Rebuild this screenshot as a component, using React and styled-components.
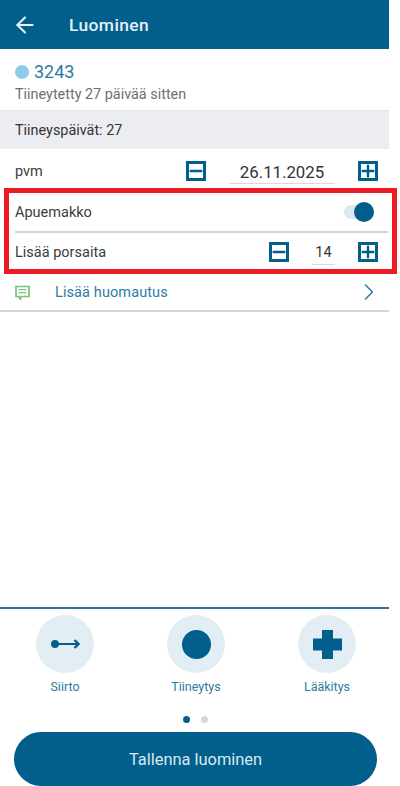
import styled, { createGlobalStyle } from "styled-components";
import { ArrowLeft, ChevronRight, Minus, Plus } from "lucide-react";

const Global = createGlobalStyle`
    html, body {
        margin: 0;
        padding: 0;
        background: #fff;
        overflow: hidden;
    }
    body {
        font-family: Roboto, "Liberation Sans", sans-serif;
    }
`;

const blue = "#025f8c";

const Page = styled.div`
    width: 389px;
    height: 786px;
    display: flex;
    flex-direction: column;
`;
const Header = styled.header`
    height: 49px;
    flex: none;
    background: ${blue};
    color: #e6f0f5;
    display: flex;
    align-items: center;
    padding-left: 12px;
    box-sizing: border-box;
`;
const Title = styled.div`
    font-size: 17.4px;
    font-weight: 500;
    margin-left: 31px;
    letter-spacing: 0.4px;
`;
const Animal = styled.div`
    height: 62px;
    flex: none;
    box-sizing: border-box;
    padding: 12px 15px 0;
    border-bottom: 1px solid #e4e4e8;
`;
const AnimalRow = styled.div`
    display: flex;
    align-items: center;
    gap: 5px;
    height: 21px;
    color: #2b7ca3;
    font-size: 18px;
`;
const Dot = styled.span`
    width: 14px;
    height: 14px;
    border-radius: 50%;
    background: #8ccbe9;
`;
const Sub = styled.div`
    font-size: 14.4px;
    color: #6f6f6f;
    margin-top: 4px;
`;
const Band = styled.div`
    height: 38px;
    flex: none;
    background: #ecedf2;
    display: flex;
    align-items: center;
    padding-left: 15px;
    font-size: 14.4px;
    color: #333;
`;
const Row = styled.div`
    height: ${(p) => p.$h}px;
    flex: none;
    box-sizing: border-box;
    display: flex;
    align-items: center;
    justify-content: space-between;
    font-size: 14.5px;
    color: #3c3c3c;
    padding-left: ${(p) => p.$pl || 0}px;
    padding-top: ${(p) => p.$pt || 0}px;
`;
const Stepper = styled.div`
    display: flex;
    align-items: center;
    margin-right: ${(p) => p.$mr}px;
`;
const StepBtn = styled.span`
    width: 20px;
    height: 20px;
    box-sizing: border-box;
    border: 3px solid ${blue};
    color: ${blue};
    display: flex;
    align-items: center;
    justify-content: center;
    svg {
        flex: none;
    }
`;
const Value = styled.div`
    width: ${(p) => p.$w}px;
    margin: 0 23px;
    text-align: center;
    border-bottom: 1px solid #d9d9d9;
    color: #333;
    font-size: ${(p) => p.$fs}px;
    line-height: 22px;
    padding-top: 2px;
`;
const RedBox = styled.div`
    margin: 0 -8px 0 4px;
    height: 86px;
    flex: none;
    box-sizing: border-box;
    border: 5px solid #ed1c24;
    padding-left: 6px;
`;
const InnerLine = styled.div`
    height: 2px;
    background: #d4d4d4;
    margin-right: 4px;
`;
const Toggle = styled.div`
    width: 30px;
    height: 14px;
    margin-right: 18px;
    border-radius: 7px;
    background: #dbe8ef;
    display: flex;
    justify-content: flex-end;
    align-items: center;
`;
const Knob = styled.span`
    width: 20px;
    height: 20px;
    border-radius: 50%;
    background: ${blue};
`;
const NoteRow = styled.div`
    height: 38px;
    flex: none;
    box-sizing: border-box;
    border-bottom: 2px solid #d4d4d4;
    display: flex;
    align-items: center;
    padding: 0 6px 0 15px;
    color: #2b7ca3;
    font-size: 14.5px;
`;
const NoteText = styled.span`
    margin-left: 25px;
    flex: 1;
    letter-spacing: 0.1px;
`;
const Spacer = styled.div`
    flex: 1;
`;
const Actions = styled.div`
    flex: none;
    height: 101px;
    box-sizing: border-box;
    border-top: 2px solid #2f7596;
    display: grid;
    grid-template-columns: repeat(3, 131px);
    padding: 6px 0 0 0;
`;
const Action = styled.div`
    display: flex;
    flex-direction: column;
    align-items: center;
    padding-right: 1px;
    color: #2b7ca3;
    font-size: 12.5px;
`;
const Circle = styled.div`
    width: 58px;
    height: 58px;
    border-radius: 50%;
    background: #e2eef4;
    display: flex;
    align-items: center;
    justify-content: center;
    margin-bottom: 6px;
`;
const BigDot = styled.span`
    width: 29px;
    height: 29px;
    border-radius: 50%;
    background: ${blue};
`;
const Pager = styled.div`
    flex: none;
    height: 24px;
    box-sizing: border-box;
    display: flex;
    justify-content: center;
    align-items: center;
    gap: 11px;
    padding: 0 0 1px 2px;
`;
const PagerDot = styled.span`
    width: 7px;
    height: 7px;
    border-radius: 50%;
    background: ${(p) => (p.$on ? blue : "#d8d8d8")};
`;
const SaveButton = styled.button`
    flex: none;
    width: 363px;
    height: 54px;
    margin-left: 14px;
    border: 0;
    border-radius: 27px;
    background: ${blue};
    color: #d8e8f0;
    font-family: inherit;
    font-size: 16.4px;
`;

function Step({ plus }) {
    return (
        <StepBtn>
            {plus ? <Plus size={18} strokeWidth={2.4} absoluteStrokeWidth /> : <Minus size={18} strokeWidth={2.6} absoluteStrokeWidth />}
        </StepBtn>
    );
}

export default function App() {
    return (
        <Page>
            <Global />
            <Header>
                <ArrowLeft size={26} strokeWidth={1.9} />
                <Title>Luominen</Title>
            </Header>
            <Animal>
                <AnimalRow><Dot />3243</AnimalRow>
                <Sub>Tiineytetty 27 päivää sitten</Sub>
            </Animal>
            <Band>Tiineyspäivät: 27</Band>
            <Row $h={39} $pl={15} $pt={5}>
                pvm
                <Stepper $mr={11}>
                    <Step />
                    <Value $w={106} $fs={16.8}>26.11.2025</Value>
                    <Step plus />
                </Stepper>
            </Row>
            <RedBox>
                <Row $h={38}>
                    Apuemakko
                    <Toggle><Knob /></Toggle>
                </Row>
                <InnerLine />
                <Row $h={36} $pt={2}>
                    Lisää porsaita
                    <Stepper $mr={14}>
                        <Step />
                        <Value $w={23} $fs={14.5}>14</Value>
                        <Step plus />
                    </Stepper>
                </Row>
            </RedBox>
            <NoteRow>
                <svg width="15" height="15" viewBox="0 0 15 15" fill="none" stroke="#78c27b" strokeWidth="1.7">
                    <path d="M1 1.5h13v10H5.5v2.5L3 11.5H1z" />
                    <path d="M3.5 4.7h8M3.5 7.7h8" strokeWidth="1.3" />
                </svg>
                <NoteText>Lisää huomautus</NoteText>
                <ChevronRight size={28} strokeWidth={1.3} color="#2b7ca3" />
            </NoteRow>
            <Spacer />
            <Actions>
                <Action>
                    <Circle>
                        <svg width="29" height="12" viewBox="0 0 29 12" fill="none" stroke={blue} strokeWidth="2">
                            <circle cx="4" cy="6" r="4" fill={blue} stroke="none" />
                            <path d="M4 6h23" />
                            <path d="M23.5 2l4 4-4 4" strokeWidth="2.4" />
                        </svg>
                    </Circle>
                    Siirto
                </Action>
                <Action>
                    <Circle><BigDot /></Circle>
                    Tiineytys
                </Action>
                <Action>
                    <Circle>
                        <svg width="29" height="29" viewBox="0 0 29 29" fill={blue}>
                            <path d="M9 0h11v8.500h9v12h-9V29H9v-8.500H0v-12h9z" />
                        </svg>
                    </Circle>
                    Lääkitys
                </Action>
            </Actions>
            <Pager>
                <PagerDot $on />
                <PagerDot />
            </Pager>
            <SaveButton>Tallenna luominen</SaveButton>
        </Page>
    );
}
